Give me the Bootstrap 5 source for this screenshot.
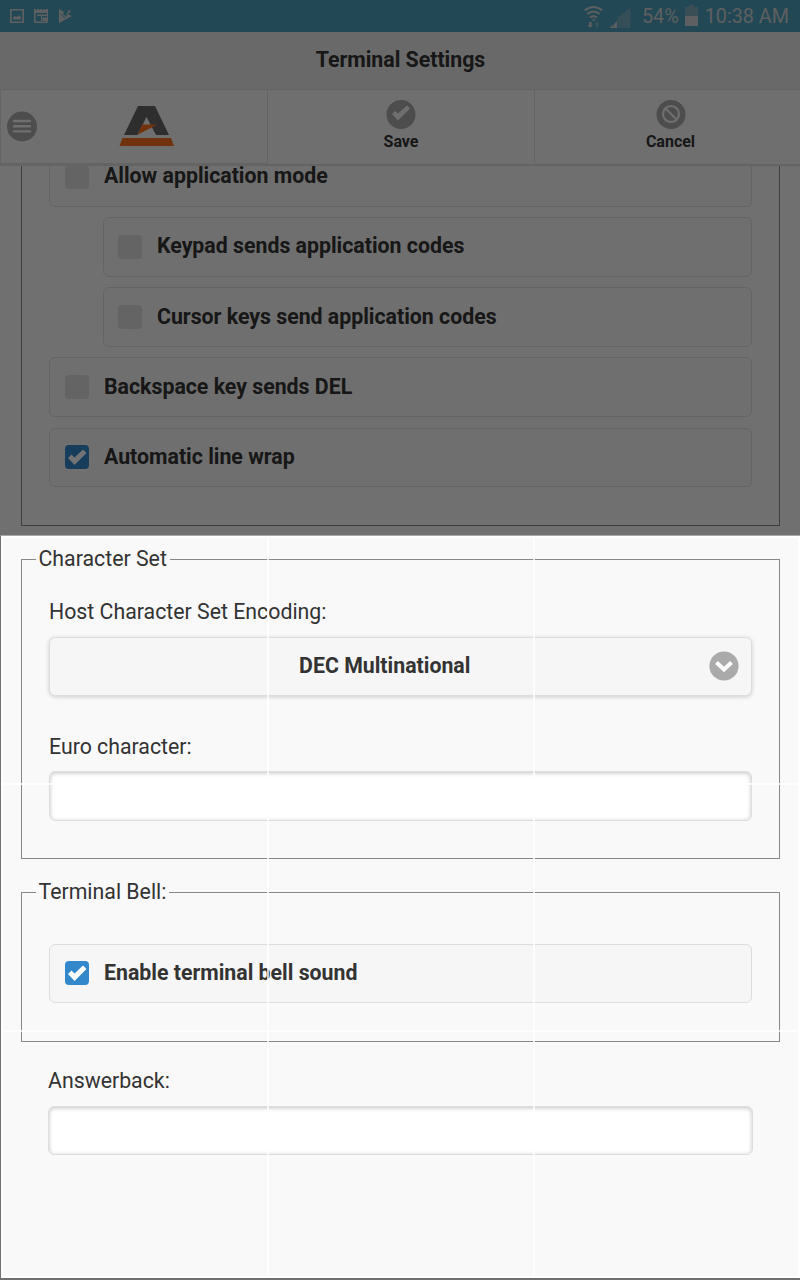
<!DOCTYPE html>
<html lang="en">
<head>
<meta charset="utf-8">
<meta name="viewport" content="width=device-width, initial-scale=1">
<title>Terminal Settings</title>
<link href="https://cdn.jsdelivr.net/npm/bootstrap@5.3.0/dist/css/bootstrap.min.css" rel="stylesheet">
<style>
body{font-family:Roboto,"Liberation Sans",sans-serif;font-size:21.3px;line-height:28px;color:#333;background:#f9f9f9}
.screen{width:800px;height:1280px}
.status{height:32px;background:#4ea0bc;color:#cfd3d5;font-size:19.8px;padding:2px 11px 0 9px}
.titlebar{height:58px;background:#e9e9e9;border-bottom:1px solid #ddd;padding:0 0 1px 1px}
.tools{height:76px;background:#f6f6f6;border-bottom:2px solid #dedede}
.tool{border-left:1px solid #ddd;font-size:16px;line-height:20px;width:267px}
.tool-menu{border-bottom:1px solid #dedede}
.tool-cancel{width:266px;padding-left:6px}
.content-area{height:1114px}
.group{border:1px solid #888;margin:0 20px 0 21px;padding:0 27px}
.group legend{float:none;width:auto;font-size:21.3px;line-height:24px;height:24px;margin:0 0 0 -13px;padding:0 3px 0 2.5px}
.first{border-top:0;height:379px}
.option{height:60px;line-height:18px;border:1px solid #ddd;border-radius:6px;background:#f6f6f6;padding:0 15px 2px;margin-bottom:10px;font-weight:700}
.option.low{padding-bottom:0}
.option.low .tick{margin-top:0}
.indent{margin-left:54px;padding-left:14px}
.tick{width:24px;height:24px;border-radius:4px;background:#dedede;margin-right:15px;margin-top:2px}
.tick.on{background:#38c;margin-top:0}
.field{height:50px;border:1px solid #ddd;border-radius:6px;background:#fff;box-shadow:inset 0 1px 4px rgba(0,0,0,.24);width:100%;display:block}
.picker{height:59px;border:1px solid #ddd;border-radius:6px;background:#f6f6f6;box-shadow:0 1px 4px rgba(0,0,0,.18);padding:0 12.5px 2px 11px;color:#333}
.shade{height:535px;background:rgba(0,0,0,.55)}
.lit{height:745px;border:solid #707070;border-width:1px 0 2px 1px;border-top-color:#a8a8a8}
.lit-in{border:2px solid #fff}
.vline{width:2px;background:rgba(255,255,255,.75)}
.hline{height:2px;background:rgba(255,255,255,.75)}
</style>
</head>
<body>
<div class="screen position-relative overflow-hidden">
  <div class="status d-flex align-items-center">
    <svg width="68" height="20" viewBox="0 0 68 20" fill="#cfd3d5">
      <path fill-rule="evenodd" d="M1 2h14v14H1zM2.700 3.500v11h10.600v-11zM4 12.500v-2l2-1.500 2 1 2-2 2 2.500v2z"/>
      <path fill-rule="evenodd" d="M25 2h2v1h1V2h2v1h1V2h2v1h1V2h2v1h1V2h2v13l-1 1H26l-1-1zm1.500 4v8.500H38V6zM28 7.500h10V9h-5v5h-1V9h-4zM33.500 10.500H38v3.500h-4.500z"/>
      <path d="M50 2l5 3-1 2 2.500 2L60 3l1.500 1-2 3.500L63 9l-13 7z"/>
      <path d="M51.800 7l3.700 4 4.500-5" fill="none" stroke="#4ea0bc" stroke-width=".9"/>
    </svg>
    <div class="ms-auto d-flex align-items-center">
      <svg width="50" height="28" viewBox="0 0 50 28" class="me-2">
        <g fill="none" stroke="#cfd3d5" stroke-width="2"><path d="M.8 7.500q8.700-7 17.400 0M3.500 11q6-5 12 0M6.200 14.500q3.300-2.700 6.600 0"/></g>
        <path d="M7.700 16.500h3.600L9.500 18.500zM5 19h2.500v3H9l-2.800 3-2.700-3H5z" fill="#cfd3d5"/>
        <path d="M12 24.500v-3h-1.500L13 18.500l2.500 3H14v3z" fill="#7fb6ca"/>
        <path d="M33.500 25V14.500L46.500 4.500V25z" fill="#79adc0"/>
        <path d="M25.500 25l4-3.500V25zM30 25V21l3-3v7z" fill="#cfd3d5"/>
      </svg>
      <span>54%</span>
      <svg width="13" height="22" viewBox="0 0 13 22" style="margin:0 7px 2px 6px"><path d="M4 0h5v2h4v9H0V2h4z" fill="#7fadbd"/><path d="M0 11h13v10H0z" fill="#cfd3d5"/></svg>
      <span>10:38 AM</span>
    </div>
  </div>
  <div class="titlebar d-flex align-items-center justify-content-center fw-bold">Terminal Settings</div>
  <div class="tools d-flex">
    <div class="tool tool-menu d-flex align-items-center">
      <svg width="200" height="60" viewBox="0 0 200 60">
        <circle cx="21" cy="29.500" r="15" fill="#aaa"/>
        <path d="M13 24h16M13 29.200h16M13 34.400h16" stroke="#f6f6f6" stroke-width="2.400" stroke-linecap="round"/>
        <path d="M137 9h17l14 29h-13l-9.500-18-9 18H123z" fill="#666"/>
        <path d="M141 27.500h15.500L137 37.500z" fill="#fb7221"/>
        <path d="M121.500 41h48.500l3 8h-54.500z" fill="#fb7221"/>
      </svg>
    </div>
    <div class="tool d-flex flex-column align-items-center fw-bold">
      <svg width="30" height="31" viewBox="0 0 30 31" class="mt-2"><circle cx="15" cy="16.500" r="14.500" fill="#aaa"/><path d="M6 16l3-3 3 2.500 9-8 3 3-12 12z" fill="#f6f6f6"/></svg>
      <span class="pt-1" style="margin-top:-1px">Save</span>
    </div>
    <div class="tool tool-cancel d-flex flex-column align-items-center fw-bold">
      <svg width="30" height="31" viewBox="0 0 30 31" class="mt-2"><circle cx="15" cy="16.500" r="14.500" fill="#aaa"/><g fill="none" stroke="#f6f6f6" stroke-width="2.200"><circle cx="15" cy="16" r="8"/><path d="M9.300 10.300l11.400 11.400"/></g></svg>
      <span class="pt-1" style="margin-top:-1px">Cancel</span>
    </div>
  </div>
  <div class="content-area overflow-hidden">
    <div class="group first">
      <div class="option d-flex align-items-center" style="margin-top:-19px"><span class="tick"></span>Allow application mode</div>
      <div class="option indent d-flex align-items-center"><span class="tick"></span>Keypad sends application codes</div>
      <div class="option indent low d-flex align-items-center"><span class="tick"></span>Cursor keys send application codes</div>
      <div class="option low d-flex align-items-center mb-0"><span class="tick"></span>Backspace key sends DEL</div>
      <div class="option d-flex align-items-center" style="height:59px;margin-top:11px"><span class="tick on"><svg class="d-block" width="24" height="24" viewBox="0 0 24 24"><path d="M3 13l3.500-3.500 3 3L18 4.500 21.500 8 9.500 20z" fill="#fff"/></svg></span>Automatic line wrap</div>
    </div>
    <fieldset class="group" style="margin-top:21px;height:312px">
      <legend>Character Set</legend>
      <div style="padding-top:27px;height:66px">Host Character Set Encoding:</div>
      <button type="button" class="picker w-100 d-flex align-items-center fw-bold"><span class="flex-grow-1 text-center">DEC Multinational</span><svg width="30" height="30" viewBox="0 0 30 30" style="margin-top:1px"><circle cx="15" cy="15" r="14.600" fill="#aaa"/><path d="M7.500 11.500L15 18.500l7.500-7" fill="none" stroke="#fff" stroke-width="4"/></svg></button>
      <div style="padding-top:37px;height:75px">Euro character:</div>
      <input class="field" aria-label="Euro character">
    </fieldset>
    <fieldset class="group" style="margin-top:21px;height:162px">
      <legend>Terminal Bell:</legend>
      <div class="option d-flex align-items-center" style="height:59px;margin-top:40px"><span class="tick on"><svg class="d-block" width="24" height="24" viewBox="0 0 24 24"><path d="M3 13l3.500-3.500 3 3L18 4.500 21.500 8 9.500 20z" fill="#fff"/></svg></span>Enable terminal bell sound</div>
    </fieldset>
    <div style="padding:25px 47px 0 48px">
      <div style="height:39px">Answerback:</div>
      <input class="field" aria-label="Answerback" style="height:49px">
    </div>
  </div>
  <div class="position-absolute top-0 start-0 w-100 h-100 pe-none">
    <div class="shade"></div>
    <div class="lit position-relative">
      <div class="lit-in h-100"></div>
      <div class="vline position-absolute top-0 h-100" style="left:266px"></div>
      <div class="vline position-absolute top-0 h-100" style="left:532px"></div>
      <div class="hline position-absolute start-0 w-100" style="top:247px"></div>
      <div class="hline position-absolute start-0 w-100" style="top:494px"></div>
    </div>
  </div>
</div>
<script src="https://cdn.jsdelivr.net/npm/bootstrap@5.3.0/dist/js/bootstrap.bundle.min.js"></script>
</body>
</html>
